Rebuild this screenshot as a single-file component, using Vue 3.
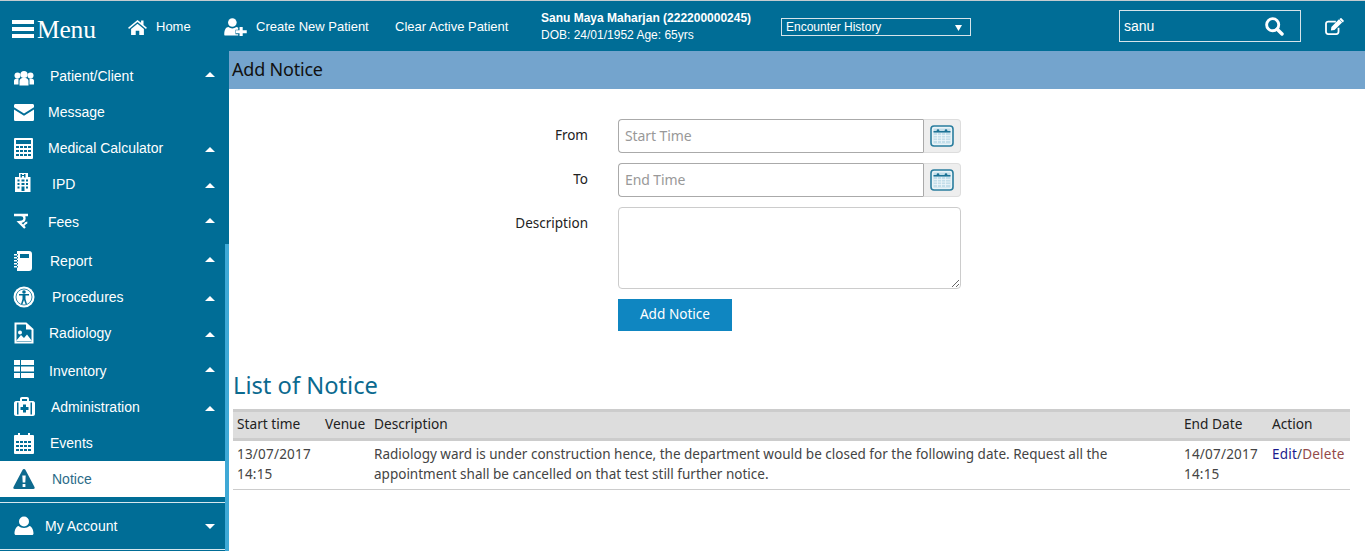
<template>
  <div class="page">
    <header class="topbar">
      <div class="brand">
        <span class="burger"><i></i><i></i><i></i></span>
        <span class="brand-text">Menu</span>
      </div>
      <a class="top-link home">
        <svg width="19" height="16" viewBox="0 0 20 17"><path fill="#fff" d="M10 1 0 9.300l1 1.200L10 3.200l9 7.300 1-1.200-3.600-3V1.600h-2.600v2.500zM3.200 10.600V17h4.900v-4.400h3.800V17h4.900v-6.400L10 5z"/></svg>
        <span>Home</span>
      </a>
      <a class="top-link create">
        <svg width="25" height="18" viewBox="0 0 25 20"><circle cx="9" cy="5" r="4.800" fill="#fff"/><path fill="#fff" d="M1 19.500c-.7 0-1-.5-1-1.200C0 13 2 10 4.600 10c1.300 1 2.800 1.600 4.400 1.600S12.100 11 13.400 10c.8 0 1.500.3 2.100.8v2.200h-3v5h3v1.500z"/><path fill="#fff" d="M17 10h3.500v3.500H25V17h-4.500v3H17v-3h-4v-3.500h4z"/></svg>
        <span>Create New Patient</span>
      </a>
      <a class="top-link clear">Clear Active Patient</a>
      <div class="patient">
        <div class="patient-name">Sanu Maya Maharjan (222200000245)</div>
        <div class="patient-dob">DOB: 24/01/1952 Age: 65yrs</div>
      </div>
      <div class="encounter">
        <span>Encounter History</span>
        <svg width="7" height="7" viewBox="0 0 7 7"><path fill="#fff" d="M0 1h7L3.500 7z"/></svg>
      </div>
      <div class="search">
        <span>sanu</span>
        <svg width="21" height="19" viewBox="0 0 21 21"><circle cx="8.500" cy="8.500" r="6.700" fill="none" stroke="#fff" stroke-width="3.200"/><path stroke="#fff" stroke-width="3.800" stroke-linecap="round" d="m13.500 13.500 5.300 5.300"/></svg>
      </div>
      <svg class="compose" width="21" height="17" viewBox="0 0 21 19"><path fill="none" stroke="#fff" stroke-width="2" d="M15 11v4.500a2.500 2.500 0 0 1-2.500 2.500h-9A2.500 2.500 0 0 1 1 15.500v-9A2.500 2.500 0 0 1 3.500 4H12"/><path fill="#fff" d="m7 10 8.500-8.500 3.500 3.500L10.500 13.500 6.500 14zM16.500.6 18 0l3 3-.6 1.500-.6.600-3.500-3.500z"/></svg>
    </header>

    <div class="body">
      <aside class="sidebar">
        <nav class="nav">
          <a
            v-for="item in menu"
            :key="item.label"
            class="nav-row"
            :class="[item.cls, { active: item.active }]"
          >
            <span class="nav-icon">
              <svg width="22" height="22" viewBox="0 0 22 22" v-html="item.icon"></svg>
            </span>
            <span class="nav-label" :class="item.pad">{{ item.label }}</span>
            <span v-if="item.caret" class="caret" :class="{ high: item.high }"></span>
          </a>
          <a class="nav-row account">
            <span class="nav-icon">
              <svg width="22" height="22" viewBox="0 0 22 22"><circle cx="11" cy="6.500" r="5" fill="#fff"/><path fill="#fff" d="M3 20c-1 0-1.500-.6-1.500-1.500 0-3.500 1.500-7 4-7.500 1.400 1.200 3.400 2 5.500 2s4.100-.8 5.500-2c2.500.5 4 4 4 7.500 0 .9-.5 1.500-1.500 1.500z"/></svg>
            </span>
            <span class="nav-label">My Account</span>
            <span class="caret down"></span>
          </a>
        </nav>
        <div class="track"><div class="thumb"></div></div>
      </aside>

      <main class="main">
        <div class="title-bar">Add Notice</div>

        <form class="notice-form" @submit.prevent>
          <label class="field-label">From</label>
          <div class="date-field">
            <input type="text" placeholder="Start Time" />
            <span class="addon"><svg width="24" height="22" viewBox="0 0 24 22" v-html="calendarIcon"></svg></span>
          </div>
          <label class="field-label">To</label>
          <div class="date-field">
            <input type="text" placeholder="End Time" />
            <span class="addon"><svg width="24" height="22" viewBox="0 0 24 22" v-html="calendarIcon"></svg></span>
          </div>
          <label class="field-label">Description</label>
          <textarea></textarea>
          <span></span>
          <button class="submit" type="submit">Add Notice</button>
        </form>

        <h2 class="list-title">List of Notice</h2>
        <table class="notices">
          <thead>
            <tr>
              <th class="c-start">Start time</th>
              <th class="c-venue">Venue</th>
              <th>Description</th>
              <th class="c-end">End Date</th>
              <th class="c-action">Action</th>
            </tr>
          </thead>
          <tbody>
            <tr v-for="row in notices" :key="row.start">
              <td class="spaced">{{ row.start }}<br />{{ row.startTime }}</td>
              <td></td>
              <td>{{ row.line1 }}<br />{{ row.line2 }}</td>
              <td class="spaced">{{ row.end }}<br />{{ row.endTime }}</td>
              <td class="spaced"><a class="edit">Edit</a>/<a class="delete">Delete</a></td>
            </tr>
          </tbody>
        </table>
      </main>
    </div>
  </div>
</template>

<script setup>
const calendarIcon = `
  <rect x="1" y="1" width="22" height="20" rx="3" fill="#eaf4f8" stroke="#2a7d9e" stroke-width="1.600"/>
  <rect x="3.500" y="3.500" width="17" height="15" fill="#c3deea"/>
  <rect x="3.500" y="6" width="17" height="1.500" fill="#1d7396"/>
  <path stroke="#eef6fa" stroke-width=".8" d="M3.500 10.500h17M3.500 13h17M3.500 15.500h17M7.500 8v10M11.500 8v10M15.500 8v10"/>
  <circle cx="8" cy="5.500" r="1.300" fill="#1d7396"/><circle cx="16" cy="5.500" r="1.300" fill="#1d7396"/>`

const menu = [
  { label: 'Patient/Client', caret: true, high: true, pad: 'p2', icon: '<g fill="#fff" transform="translate(0 1.500)"><circle cx="11" cy="8" r="3.600"/><circle cx="4.500" cy="9" r="3"/><circle cx="17.500" cy="9" r="3"/><path d="M6.500 19v-4.500c0-2 1.500-3.300 4.500-3.300s4.500 1.300 4.500 3.300V19zM1 18v-3.500c0-1.500 1-2.600 3-2.600.5 0 1 0 1.500.2v5.900zM21 18v-3.500c0-1.500-1-2.600-3-2.600-.5 0-1 0-1.500.2v5.900z"/></g>' },
  { label: 'Message', icon: '<g fill="#fff"><path d="M1 4.500C1 3.500 1.700 3 2.600 3h16.800c.9 0 1.600.5 1.600 1.500v1.800L11 12.500 1 6.300z"/><path d="M1 8.500l10 6.200 10-6.200v10c0 1-.7 1.500-1.600 1.500H2.600C1.700 20 1 19.500 1 18.500z"/></g>' },
  { label: 'Medical Calculator', caret: true, icon: '<path fill="#fff" fill-rule="evenodd" d="M2 1h17a1 1 0 0 1 1 1v19a1 1 0 0 1-1 1H2a1 1 0 0 1-1-1V2a1 1 0 0 1 1-1zm1 2v4h15V3zm0 6v2h3V9zm4 0v2h3V9zm4 0v2h3V9zm4 0v2h3V9zM3 13v2h3v-2zm4 0v2h3v-2zm4 0v2h3v-2zm4 0v2h3v-2zM3 17v2h3v-2zm4 0v2h3v-2zm4 0v2h3v-2zm4 0v2h3v-2z"/>' },
  { label: 'IPD', caret: true, pad: 'p4', icon: '<path fill="#fff" fill-rule="evenodd" d="M6 0h9v4h2.500v15H2V4h4zm1.500 1v3.500H9V3h2v1.500h1.500V1H11v1H9V1zM4.500 6.500v2h2v-2zm4 0v2h3v-2zm4.500 0v2h2v-2zM4.500 10v2h2v-2zm4 0v2h3v-2zm4.500 0v2h2v-2zM4.500 13.500v2h2v-2zm4 0V18h3v-4.500zm4.500 0v2h2v-2z"/>' },
  { label: 'Fees', caret: true, high: true, cls: 'gap2', icon: '<path fill="none" stroke="#fff" stroke-width="2.300" d="M1 4h14M4 4h4c4.500 0 5 6.500-.5 7l-1.500.2 6 5.800"/><path fill="none" stroke="#fff" stroke-width="1.800" d="M10.500 14.500c1-1.500 2-3 3.800-3"/>' },
  { label: 'Report', caret: true, high: true, pad: 'p2', cls: 'gap3', icon: '<path fill="#fff" fill-rule="evenodd" d="M4 1h12a3 3 0 0 1 3 3v14a3 3 0 0 1-3 3H4zm3 3v4h9V4zM1 4h4v1.500H1zm0 3h4v1.500H1zm0 3h4v1.500H1zm0 3h4v1.500H1zm0 3h4v1.500H1z"/>' },
  { label: 'Procedures', caret: true, pad: 'p4', icon: '<circle cx="11" cy="11" r="10.500" fill="#fff"/><circle cx="11" cy="11" r="8" fill="none" stroke="#006d96" stroke-width=".8"/><circle cx="11" cy="6" r="1.800" fill="#006d96"/><path fill="#006d96" d="M6 8h10v1.500h-3.500V13l1.500 5h-1.500L11 14l-1.500 4H8l1.500-5V9.500H6z"/>' },
  { label: 'Radiology', caret: true, pad: 'p1', icon: '<path fill="none" stroke="#fff" stroke-width="2" d="M2.500 1.500H13l6.500 6v13h-17z"/><path fill="#fff" d="M13 1.500v6h6.500zM3 19l5-6 3 3 3-3.500 5 6.500z"/><circle cx="7" cy="10.500" r="2" fill="#fff"/>' },
  { label: 'Inventory', caret: true, high: true, pad: 'p1', cls: 'gap2', icon: '<path fill="#fff" d="M1 0h6v5H1zm7 0h13v5H8zM1 6.500h6v5H1zm7 0h13v5H8zM1 13h6v5H1zm7 0h13v5H8z"/>' },
  { label: 'Administration', caret: true, pad: 'p3', icon: '<path fill="#fff" fill-rule="evenodd" d="M7 3c0-1.300.7-2 2-2h5c1.300 0 2 .7 2 2v2h4c1 0 2 1 2 2v11c0 1-1 2-2 2H3c-1 0-2-1-2-2V7c0-1 1-2 2-2h4zm2 0v2h5V3zM4 6.500v12h1.500v-12zm13.500 0v12H19v-12zM10 8.500v2.500H7.500v3H10v2.500h3V14h2.500v-3H13V8.500z"/>' },
  { label: 'Events', caret: false, pad: 'p2', icon: '<path fill="#fff" fill-rule="evenodd" d="M2 3h3V1h2v2h8V1h2v2h3a1 1 0 0 1 1 1v17a1 1 0 0 1-1 1H2a1 1 0 0 1-1-1V4a1 1 0 0 1 1-1zm1 6v2h3V9zm4 0v2h3V9zm4 0v2h3V9zm4 0v2h3V9zM3 13v2h3v-2zm4 0v2h3v-2zm4 0v2h3v-2zm4 0v2h3v-2zM3 17v2h3v-2zm4 0v2h3v-2zm4 0v2h3v-2zm4 0v2h3v-2z"/>' },
  { label: 'Notice', active: true, pad: 'p4', icon: '<path fill="#0e6a8e" fill-rule="evenodd" d="M11 1c.7 0 1.200.4 1.500 1L21.500 19c.5 1 0 2-1.200 2H1.700C.5 21 0 20 .5 19L9.500 2c.3-.6.800-1 1.500-1zM9.300 7.500l.4 7h2.600l.4-7zm.3 8.500v3h2.800v-3z"/>' }
]

const notices = [
  {
    start: '13/07/2017',
    startTime: '14:15',
    line1: 'Radiology ward is under construction hence, the department would be closed for the following date. Request all the',
    line2: 'appointment shall be cancelled on that test still further notice.',
    end: '14/07/2017',
    endTime: '14:15'
  }
]
</script>

<style>
html,
body {
  margin: 0;
  background: #fff;
}
</style>

<style scoped>
.page {
  width: 1365px;
  height: 551px;
  overflow: hidden;
  display: flex;
  flex-direction: column;
  font-family: "Noto Sans", sans-serif;
  color: #333;
}

/* Top bar */
.topbar {
  height: 50px;
  flex-shrink: 0;
  border-top: 1px solid #c4ccd0;
  background: #006d96;
  color: #fff;
  display: flex;
  align-items: center;
  font-family: "Liberation Sans", sans-serif;
  font-size: 13px;
}
.brand {
  display: flex;
  align-items: center;
  margin-left: 12px;
  width: 116px;
  margin-top: 6px;
}
.burger {
  display: flex;
  flex-direction: column;
  gap: 3px;
  width: 22px;
  margin-right: 4px;
}
.burger i {
  height: 4px;
  background: #fff;
}
.brand-text {
  font-family: "Liberation Serif", serif;
  font-size: 25.5px;
  letter-spacing: -0.2px;
  margin-top: 2px;
  margin-left: -1px;
}
.top-link {
  display: flex;
  align-items: center;
  color: #fff;
  margin-top: 1px;
}
.home svg {
  margin-right: 9px;
}
.home {
  width: 95px;
}
.create svg {
  margin-right: 8px;
}
.create {
  width: 172px;
}
.clear {
  width: 146px;
  margin-top: 0;
}
.patient {
  width: 240px;
  font-size: 12px;
  line-height: 17px;
  margin-top: 1px;
}
.patient-name {
  font-weight: 700;
}
.encounter {
  width: 190px;
  height: 18px;
  box-sizing: border-box;
  border: 1px solid #d6e4ea;
  display: flex;
  align-items: center;
  justify-content: space-between;
  padding: 0 8px 0 4px;
  font-size: 12px;
  margin-top: 2px;
}
.search {
  margin-left: 148px;
  width: 182px;
  height: 32px;
  box-sizing: border-box;
  border: 1px solid #d6e4ea;
  display: flex;
  align-items: center;
  justify-content: space-between;
  padding: 0 15px 0 4px;
  font-size: 14px;
}
.compose {
  margin-left: 23px;
}

/* Sidebar */
.body {
  flex: 1;
  display: flex;
  min-height: 0;
}
.sidebar {
  width: 229px;
  flex-shrink: 0;
  display: flex;
  background: #006d96;
}
.nav {
  width: 225px;
  padding-top: 7px;
}
.track {
  width: 4px;
  padding-top: 193px;
}
.thumb {
  height: 320px;
  background: #3fa9d6;
}
.nav-row {
  height: 36px;
  display: flex;
  align-items: center;
  padding-left: 13px;
  color: #fff;
  font-family: "Liberation Sans", sans-serif;
  font-size: 14px;
}
.gap2 {
  margin-top: 2px;
}
.gap3 {
  margin-top: 3px;
}
.nav-icon {
  width: 22px;
  height: 22px;
  display: flex;
}
.nav-label {
  margin-left: 13px;
  flex: 1;
}
.p1 {
  margin-left: 14px;
}
.p2 {
  margin-left: 15px;
}
.p3 {
  margin-left: 16px;
}
.p4 {
  margin-left: 17px;
}
.caret {
  width: 0;
  height: 0;
  border-left: 5px solid transparent;
  border-right: 5px solid transparent;
  border-bottom: 5px solid #fff;
  margin-right: 10px;
  margin-top: 2px;
}
.caret.high {
  margin-top: -4px;
}
.caret.down {
  border-bottom: 0;
  border-top: 5px solid #fff;
  margin-top: 1px;
}
.nav-row.active {
  background: #fff;
  color: #2c6b88;
}
.account {
  margin-top: 5px;
  height: 46px;
  border-top: 1px solid #d7e8ef;
  border-bottom: 1px solid #d7e8ef;
  padding-left: 13px;
}
.account .nav-label {
  margin-left: 10px;
}

/* Main */
.main {
  flex: 1;
  min-width: 0;
}
.title-bar {
  height: 38px;
  line-height: 37px;
  background: #74a4cd;
  padding-left: 3px;
  font-size: 18px;
  letter-spacing: -0.2px;
  color: #111;
}
.notice-form {
  display: grid;
  grid-template-columns: 359px 343px;
  column-gap: 30px;
  row-gap: 10px;
  padding-top: 30px;
  align-items: start;
}
.field-label {
  text-align: right;
  font-size: 13.5px;
  line-height: 20px;
  padding-top: 6px;
  color: #222;
}
.date-field {
  display: flex;
  height: 34px;
}
.date-field input {
  width: 305px;
  box-sizing: border-box;
  border: 1px solid #aaa;
  border-right-width: 0;
  border-radius: 4px 0 0 4px;
  padding: 0 6px 2px;
  font: 14px "Noto Sans", sans-serif;
  letter-spacing: -0.1px;
  background: #fff;
  outline: none;
}
.date-field input::placeholder {
  color: #999;
  opacity: 1;
}
.addon {
  width: 38px;
  box-sizing: border-box;
  background: #eee;
  border: 1px solid #ddd;
  border-left: 1px solid #aaa;
  border-radius: 0 4px 4px 0;
  display: flex;
  align-items: center;
  justify-content: center;
  padding-right: 1px;
}
textarea {
  width: 343px;
  height: 82px;
  box-sizing: border-box;
  border: 1px solid #ccc;
  border-radius: 4px;
  outline: none;
  display: block;
}
.submit {
  width: 114px;
  height: 32px;
  border: 0;
  background: #0f86c1;
  color: #fff;
  font: 13.6px "Noto Sans", sans-serif;
  padding: 0 0 3px;
}
.list-title {
  margin: 38px 0 0 4px;
  font-size: 23.7px;
  line-height: 32px;
  font-weight: 400;
  color: #0b6a8f;
}
.notices {
  margin: 8px 0 0 4px;
  width: 1117px;
  border-collapse: collapse;
  table-layout: fixed;
  font-size: 13.53px;
}
.notices th {
  background: #ddd;
  border-top: 3px solid #ccc;
  border-bottom: 3px solid #ccc;
  height: 22px;
  padding: 0 4px 4px;
  box-sizing: content-box;
  text-align: left;
  font-size: 13.7px;
  font-weight: 400;
  color: #222;
}
.c-start {
  width: 80px;
}
.c-venue {
  width: 41px;
}
.c-end {
  width: 80px;
}
.c-action {
  width: 74px;
}
.notices td {
  padding: 3px 4px 5px;
  line-height: 20px;
  vertical-align: top;
  border-bottom: 1px solid #ccc;
  color: #444;
}
.notices td.spaced {
  letter-spacing: 0.2px;
}
.notices td:nth-child(2) {
  padding: 0;
}
.edit {
  color: #1a1a8c;
}
.delete {
  color: #944a4a;
}
</style>
